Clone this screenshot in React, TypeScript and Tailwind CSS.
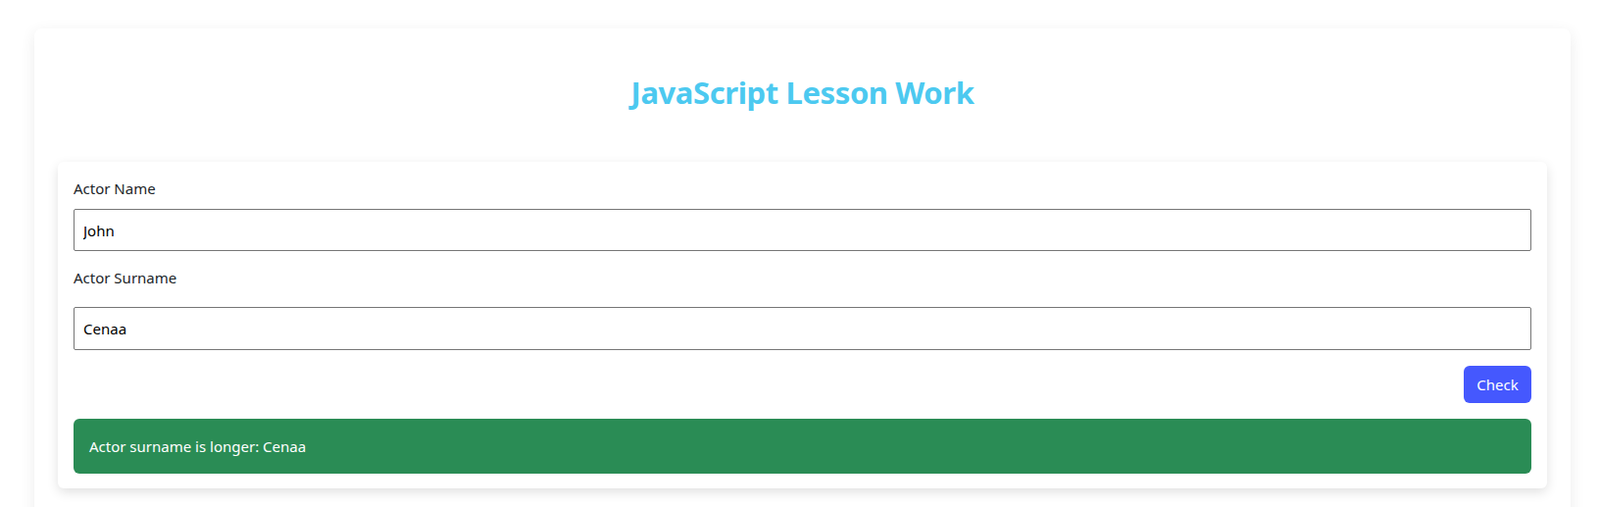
export default function App() {
  return (
    <div className="min-h-[517px] bg-white pt-[29px] font-['Segoe_UI','Noto_Sans',sans-serif]">
      <div className="ml-[35px] w-[1567px] rounded-lg bg-white px-6 pb-10 shadow-[0_4px_16px_rgba(0,0,0,0.08)]">
        <h1 className="pt-[46px] text-center text-[31px] font-bold leading-[38px] tracking-[-0.4px] text-[#4cc9f0]">
          JavaScript Lesson Work
        </h1>
        <div className="mt-[52px] rounded-md bg-white px-4 pb-[15px] pt-4 shadow-[0_4px_12px_rgba(0,0,0,0.12)]">
          <label className="block text-[15px] leading-[22px] text-[#212529]">Actor Name</label>
          <input
            readOnly
            value="John"
            className="mt-[10px] block h-[43px] w-full rounded-[2px] border border-[#767676] px-[9px] text-[15px] text-black outline-none"
          />
          <label className="mt-4 block text-[15px] leading-[22px] text-[#212529]">Actor Surname</label>
          <input
            readOnly
            value="Cenaa"
            className="mt-[19px] block h-[44px] w-full rounded-[2px] border border-[#767676] px-[9px] text-[15px] text-black outline-none"
          />
          <div className="mt-4 flex justify-end">
            <button className="h-[38px] w-[69px] rounded-md bg-[#4558fe] text-[15px] text-white">Check</button>
          </div>
          <div className="mt-4 flex h-[56px] items-center rounded-md bg-[#2a8c55] px-4 text-[15px] text-white">
            Actor surname is longer: Cenaa
          </div>
        </div>
      </div>
    </div>
  );
}
